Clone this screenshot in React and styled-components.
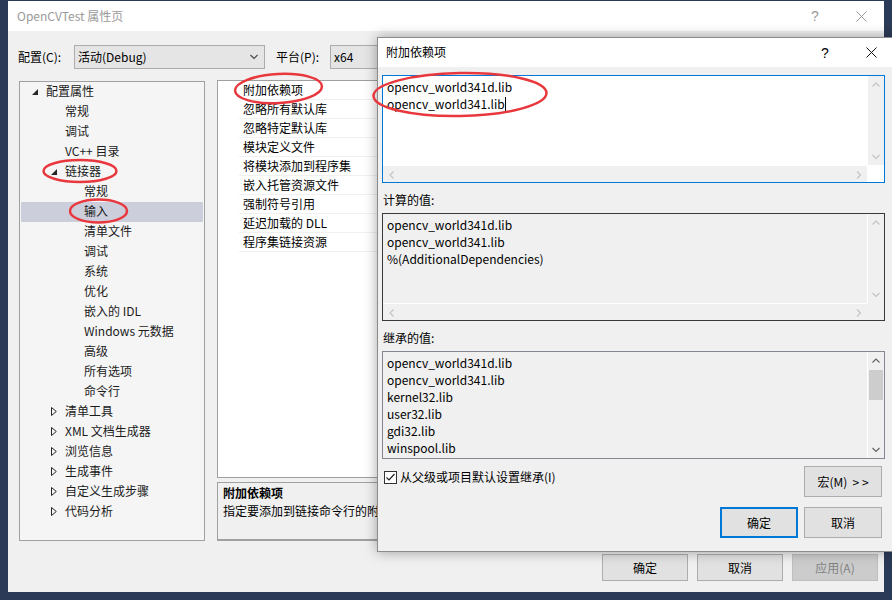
import React from 'react';
import styled, { createGlobalStyle } from 'styled-components';

const Global = createGlobalStyle`
  html, body { margin: 0; padding: 0; background: #2b3a56; }
  * { box-sizing: border-box; }
`;

const Desktop = styled.div`
  position: relative;
  width: 892px;
  height: 600px;
  overflow: hidden;
  background: #2b3a56;
  padding: 1px 0 0 8px;
  font-family: "Noto Sans CJK SC", "Noto Sans", sans-serif;
  font-size: 12px;
  color: #000;
`;

const MainWindow = styled.div`
  width: 876px;
  height: 591px;
  background: #f0f0f0;
  display: flex;
  flex-direction: column;
`;

const TitleBar = styled.div`
  height: ${p => p.$h || 30}px;
  flex: none;
  background: #fff;
  display: flex;
  align-items: center;
  color: ${p => (p.$active ? '#000' : '#9a9a9a')};
`;

const TitleText = styled.div`
  flex: 1;
  padding-left: ${p => p.$pad || 9}px;
  padding-bottom: 2px;
  font-size: 12px;
  white-space: nowrap;
`;

const CaptionButton = styled.div`
  width: 46px;
  height: 100%;
  display: flex;
  align-items: center;
  justify-content: center;
  font-size: 14px;
  font-family: "Liberation Sans", sans-serif;
`;

const ConfigRow = styled.div`
  display: flex;
  align-items: center;
  height: 24px;
  margin: 14px 0 0 10px;
`;

const FieldLabel = styled.div`
  width: ${p => p.$w}px;
  margin-left: ${p => p.$ml || 0}px;
  padding-bottom: 1px;
  white-space: nowrap;
`;

const Select = styled.div`
  width: 191px;
  height: 24px;
  border: 1px solid #acacac;
  background: #e5e5e5;
  display: flex;
  align-items: center;
  justify-content: space-between;
  padding: 0 6px 1px 3px;
`;

const Content = styled.div`
  display: flex;
  margin: 11px 11px 0 11px;
  height: 461px;
`;

const Tree = styled.div`
  width: 186px;
  height: 460px;
  margin-top: 1px;
  border: 1px solid #a0a0a0;
  background: #f5f5f5;
  padding: 0 1px;
`;

const TreeRow = styled.div`
  height: 20px;
  display: flex;
  align-items: center;
  padding-left: ${p => 11 + p.$level * 19}px;
  padding-bottom: 3px;
  background: ${p => (p.$selected ? '#cccedb' : 'transparent')};
  white-space: nowrap;
  color: #1b1b1b;
`;

const ArrowBox = styled.span`
  width: 14px;
  flex: none;
  display: flex;
  align-items: center;
  padding-top: 2px;
`;

const MiddleColumn = styled.div`
  flex: 1;
  margin-left: 12px;
  display: flex;
  flex-direction: column;
`;

const PropGrid = styled.div`
  height: 398px;
  border: 1px solid #a0a0a0;
  background: #fff;
`;

const PropRow = styled.div`
  display: flex;
  height: 19px;
`;

const Gutter = styled.div`
  width: 21px;
  flex: none;
`;

const PropName = styled.div`
  width: 250px;
  padding-left: 4px;
  border-bottom: 1px solid #f0f0f0;
  border-right: 1px solid #f0f0f0;
  line-height: 18px;
  white-space: nowrap;
`;

const PropValue = styled.div`
  flex: 1;
  border-bottom: 1px solid #f0f0f0;
`;

const DescBox = styled.div`
  margin-top: 4px;
  height: 59px;
  border: 1px solid #a0a0a0;
  border-bottom-width: 2px;
  background: #f0f0f0;
  padding: 1px 5px;
  line-height: 18px;
  white-space: nowrap;
  overflow: hidden;
`;

const DescTitle = styled.div`
  font-weight: bold;
`;

const ButtonRow = styled.div`
  display: flex;
  justify-content: flex-end;
  gap: ${p => p.$gap}px;
  margin-top: ${p => p.$mt}px;
  padding-right: ${p => p.$pr}px;
  width: ${p => (p.$w ? `${p.$w}px` : 'auto')};
`;

const Button = styled.div`
  width: ${p => p.$w}px;
  height: ${p => p.$h}px;
  border: ${p => (p.$focused ? '2px solid #0078d7' : p.$disabled ? '1px solid #bfbfbf' : '1px solid #adadad')};
  background: ${p => (p.$disabled ? '#cccccc' : '#e1e1e1')};
  color: ${p => (p.$disabled ? '#838383' : '#000')};
  display: flex;
  align-items: center;
  justify-content: center;
  padding-bottom: 1px;
  white-space: nowrap;
`;

const Dialog = styled.div`
  position: absolute;
  left: 377px;
  top: 37px;
  width: 518px;
  height: 515px;
  border: 1px solid #8c8c8c;
  background: #f0f0f0;
  box-shadow: 0 0 12px rgba(0, 0, 0, 0.35);
  display: flex;
  flex-direction: column;
`;

const DialogBody = styled.div`
  padding: 8px 0 0 4px;
  display: flex;
  flex-direction: column;
`;

const SectionLabel = styled.div`
  height: 18px;
  line-height: 18px;
  margin: 8px 0 4px 1px;
`;

const ScrollBox = styled.div`
  width: 503px;
  height: 108px;
  border: 1px solid ${p => p.$border};
  background: ${p => p.$bg};
  display: grid;
  grid-template-columns: 1fr 17px;
  grid-template-rows: ${p => (p.$hscroll ? '1fr 17px' : '1fr')};
  overflow: hidden;
`;

const ScrollContent = styled.div`
  padding: 2px 0 0 4px;
  line-height: 17px;
  overflow: hidden;
  white-space: nowrap;
`;

const VScroll = styled.div`
  background: #f0f0f0;
  border-left: 1px solid ${p => p.$edge};
  display: flex;
  flex-direction: column;
`;

const HScroll = styled.div`
  background: #f0f0f0;
  border-top: 1px solid ${p => p.$edge};
  display: flex;
  justify-content: space-between;
`;

const Corner = styled.div`
  background: ${p => p.$bg};
`;

const ArrowCell = styled.div`
  width: ${p => (p.$horizontal ? '17px' : 'auto')};
  height: 17px;
  flex: none;
  display: flex;
  align-items: center;
  justify-content: center;
`;

const Spacer = styled.div`
  flex: 1;
`;

const Thumb = styled.div`
  height: 30px;
  margin: 1px 1px 0 1px;
  background: #cdcdcd;
`;

const Caret = styled.span`
  display: inline-block;
  width: 1px;
  height: 15px;
  background: #000;
  vertical-align: -3px;
`;

const CheckRow = styled.div`
  display: flex;
  align-items: flex-start;
  width: 503px;
  margin-top: 7px;
`;

const CheckLabel = styled.label`
  display: flex;
  align-items: center;
  gap: 3px;
  margin: 2px 0 0 2px;
  line-height: 18px;
`;

const MacroButton = styled(Button)`
  margin-left: auto;
  margin-right: 3px;
`;

const Annotation = styled.svg`
  position: absolute;
  left: 0;
  top: 0;
  pointer-events: none;
`;

const Chevron = ({ dir, color }) => {
  const pts = {
    up: '0.5,4.5 4,1 7.5,4.5',
    down: '0.5,1 4,4.5 7.5,1',
    left: '4.5,0.5 1,4 4.5,7.5',
    right: '1,0.5 4.5,4 1,7.5',
  }[dir];
  const horiz = dir === 'left' || dir === 'right';
  return (
    <svg width={horiz ? 6 : 8} height={horiz ? 8 : 6} viewBox={horiz ? '0 0 6 8' : '0 0 8 6'}>
      <polyline points={pts} fill="none" stroke={color} strokeWidth="1.1" />
    </svg>
  );
};

const CloseGlyph = ({ color }) => (
  <svg width="11" height="11" viewBox="0 0 11 11">
    <path d="M0.5 0.5 L10.5 10.5 M10.5 0.5 L0.5 10.5" stroke={color} strokeWidth="1" />
  </svg>
);

const TreeArrow = ({ type }) =>
  type === 'open' ? (
    <svg width="6" height="6" viewBox="0 0 6 6">
      <polygon points="6,0 6,6 0,6" fill="#262626" />
    </svg>
  ) : (
    <svg width="6" height="9" viewBox="0 0 6 9">
      <polygon points="0.5,0.5 5.3,4.5 0.5,8.5" fill="none" stroke="#262626" strokeWidth="1" />
    </svg>
  );

const CheckBox = () => (
  <svg width="13" height="13" viewBox="0 0 13 13">
    <rect x="0.5" y="0.5" width="12" height="12" fill="#fff" stroke="#333" />
    <polyline points="2.5,6.5 5,9 10.5,3" fill="none" stroke="#222" strokeWidth="1.2" />
  </svg>
);

const tree = [
  { label: '配置属性', level: 0, arrow: 'open' },
  { label: '常规', level: 1 },
  { label: '调试', level: 1 },
  { label: 'VC++ 目录', level: 1 },
  { label: '链接器', level: 1, arrow: 'open' },
  { label: '常规', level: 2 },
  { label: '输入', level: 2, selected: true },
  { label: '清单文件', level: 2 },
  { label: '调试', level: 2 },
  { label: '系统', level: 2 },
  { label: '优化', level: 2 },
  { label: '嵌入的 IDL', level: 2 },
  { label: 'Windows 元数据', level: 2 },
  { label: '高级', level: 2 },
  { label: '所有选项', level: 2 },
  { label: '命令行', level: 2 },
  { label: '清单工具', level: 1, arrow: 'closed' },
  { label: 'XML 文档生成器', level: 1, arrow: 'closed' },
  { label: '浏览信息', level: 1, arrow: 'closed' },
  { label: '生成事件', level: 1, arrow: 'closed' },
  { label: '自定义生成步骤', level: 1, arrow: 'closed' },
  { label: '代码分析', level: 1, arrow: 'closed' },
];

const props = [
  '附加依赖项',
  '忽略所有默认库',
  '忽略特定默认库',
  '模块定义文件',
  '将模块添加到程序集',
  '嵌入托管资源文件',
  '强制符号引用',
  '延迟加载的 DLL',
  '程序集链接资源',
];

const computed = ['opencv_world341d.lib', 'opencv_world341.lib', '%(AdditionalDependencies)'];
const inherited = [
  'opencv_world341d.lib',
  'opencv_world341.lib',
  'kernel32.lib',
  'user32.lib',
  'gdi32.lib',
  'winspool.lib',
];

const DisabledScrollbars = ({ corner }) => (
  <>
    <VScroll $edge="#fff">
      <ArrowCell><Chevron dir="up" color="#c2c2c2" /></ArrowCell>
      <Spacer />
      <ArrowCell><Chevron dir="down" color="#c2c2c2" /></ArrowCell>
    </VScroll>
    <HScroll $edge="#fff">
      <ArrowCell $horizontal><Chevron dir="left" color="#c2c2c2" /></ArrowCell>
      <ArrowCell $horizontal><Chevron dir="right" color="#c2c2c2" /></ArrowCell>
    </HScroll>
    <Corner $bg={corner} />
  </>
);

export default function App() {
  return (
    <>
      <Global />
      <Desktop>
        <MainWindow>
          <TitleBar>
            <TitleText>OpenCVTest 属性页</TitleText>
            <CaptionButton>?</CaptionButton>
            <CaptionButton>
              <CloseGlyph color="#9a9a9a" />
            </CaptionButton>
          </TitleBar>

          <ConfigRow>
            <FieldLabel $w={56}>配置(C):</FieldLabel>
            <Select>
              <span>活动(Debug)</span>
              <Chevron dir="down" color="#444" />
            </Select>
            <FieldLabel $w={54} $ml={11}>平台(P):</FieldLabel>
            <Select>
              <span>x64</span>
              <Chevron dir="down" color="#444" />
            </Select>
          </ConfigRow>

          <Content>
            <Tree>
              {tree.map((t, i) => (
                <TreeRow key={i} $level={t.level} $selected={t.selected}>
                  <ArrowBox>{t.arrow && <TreeArrow type={t.arrow} />}</ArrowBox>
                  {t.label}
                </TreeRow>
              ))}
            </Tree>
            <MiddleColumn>
              <PropGrid>
                {props.map(p => (
                  <PropRow key={p}>
                    <Gutter />
                    <PropName>{p}</PropName>
                    <PropValue />
                  </PropRow>
                ))}
              </PropGrid>
              <DescBox>
                <DescTitle>附加依赖项</DescTitle>
                <div>指定要添加到链接命令行的附加项；例如 kernel32.lib</div>
              </DescBox>
            </MiddleColumn>
          </Content>

          <ButtonRow $gap={9} $mt={13} $pr={6}>
            <Button $w={86} $h={27}>确定</Button>
            <Button $w={86} $h={27}>取消</Button>
            <Button $w={86} $h={27} $disabled>应用(A)</Button>
          </ButtonRow>
        </MainWindow>

        <Dialog>
          <TitleBar $active $h={29}>
            <TitleText $pad={8}>附加依赖项</TitleText>
            <CaptionButton>?</CaptionButton>
            <CaptionButton>
              <CloseGlyph color="#111" />
            </CaptionButton>
          </TitleBar>
          <DialogBody>
            <ScrollBox $border="#0078d7" $bg="#fff" $hscroll>
              <ScrollContent>
                <div>opencv_world341d.lib</div>
                <div>
                  opencv_world341.lib
                  <Caret />
                </div>
              </ScrollContent>
              <DisabledScrollbars corner="#fff" />
            </ScrollBox>

            <SectionLabel>计算的值:</SectionLabel>
            <ScrollBox $border="#3a3a3a" $bg="#f0f0f0" $hscroll>
              <ScrollContent>
                {computed.map(c => (
                  <div key={c}>{c}</div>
                ))}
              </ScrollContent>
              <DisabledScrollbars corner="#f0f0f0" />
            </ScrollBox>

            <SectionLabel>继承的值:</SectionLabel>
            <ScrollBox $border="#828790" $bg="#f0f0f0">
              <ScrollContent>
                {inherited.map(c => (
                  <div key={c}>{c}</div>
                ))}
              </ScrollContent>
              <VScroll $edge="#fff">
                <ArrowCell><Chevron dir="up" color="#606060" /></ArrowCell>
                <Thumb />
                <Spacer />
                <ArrowCell><Chevron dir="down" color="#606060" /></ArrowCell>
              </VScroll>
            </ScrollBox>

            <CheckRow>
              <CheckLabel>
                <CheckBox />
                从父级或项目默认设置继承(I)
              </CheckLabel>
              <MacroButton $w={78} $h={31}>宏(M)&nbsp;&nbsp;&gt; &gt;</MacroButton>
            </CheckRow>

            <ButtonRow $gap={6} $mt={10} $pr={3} $w={503}>
              <Button $w={78} $h={31} $focused>确定</Button>
              <Button $w={78} $h={31}>取消</Button>
            </ButtonRow>
          </DialogBody>
        </Dialog>

        <Annotation width="892" height="600" viewBox="0 0 892 600">
          <g fill="none" stroke="#e8383d" strokeWidth="2.5">
            <ellipse cx="80" cy="171" rx="36.5" ry="11" />
            <ellipse cx="98.5" cy="211" rx="28.5" ry="11.5" />
            <ellipse cx="278.5" cy="88.5" rx="43.5" ry="14.5" transform="rotate(-3 278.5 88.5)" />
            <ellipse cx="460" cy="94.5" rx="86.5" ry="21.5" transform="rotate(-1 460 94.5)" />
          </g>
        </Annotation>
      </Desktop>
    </>
  );
}
